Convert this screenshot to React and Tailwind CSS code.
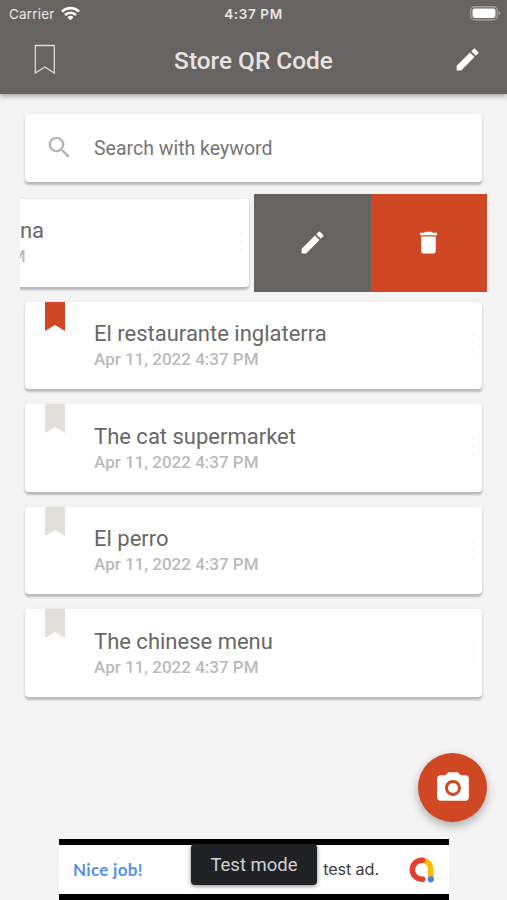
// Saved QR codes: search, swipeable list, scan button and the ad banner.

import { MdCameraAlt, MdDelete, MdEdit, MdSearch } from 'react-icons/md';

const DATE = 'Apr 11, 2022 4:37 PM';

const codes = [
  { id: 2, title: 'El restaurante inglaterra', marked: true },
  { id: 3, title: 'The cat supermarket', marked: false },
  { id: 4, title: 'El perro', marked: false },
  { id: 5, title: 'The chinese menu', marked: false },
];

const cardShadow = 'shadow-[0_2.5px_2px_rgba(0,0,0,0.2),0_1px_4px_rgba(0,0,0,0.08)]';

function StatusBar() {
  return (
    <div className="grid h-[27px] grid-cols-3 items-center pr-[7px] pl-[9px] font-['Inter',sans-serif] text-[13.5px] text-[#e9e7e6]">
      <div className="flex items-center gap-1.5">
        <span className="pt-px tracking-[0.2px]">Carrier</span>
        <svg width="19" height="15" viewBox="0 0 19 15" fill="none" stroke="#fff" strokeWidth="2.7">
          <path d="M1 5.6a12 12 0 0 1 17 0" />
          <path d="M4 9a7.8 7.8 0 0 1 11 0" />
          <path d="M9.5 14.2 6.5 11.2a4.3 4.3 0 0 1 6 0z" fill="#fff" stroke="none" />
        </svg>
      </div>
      <span className="-ml-[2px] pt-px text-center font-semibold tracking-[0.6px] whitespace-nowrap">4:37 PM</span>
      <svg className="-mr-px justify-self-end" width="31" height="15" viewBox="0 0 31 15">
        <rect x="0.75" y="0.75" width="26.5" height="13" rx="4" fill="none" stroke="#a3a09f" strokeWidth="1.3" />
        <rect x="2.5" y="2.5" width="23" height="9.5" rx="2.3" fill="#fff" />
        <path d="M28.5 5v4.6c1.2-.5 1.9-1.3 1.9-2.3s-.7-1.8-1.9-2.3z" fill="#a3a09f" />
      </svg>
    </div>
  );
}

function Header() {
  return (
    <header className="relative z-10 h-[94px] shrink-0 bg-[#676361] shadow-[0_2px_5px_rgba(0,0,0,0.35)]">
      <StatusBar />
      <div className="flex h-[67px] items-center justify-between pr-[25px] pl-[34px]">
        <svg width="22" height="31" viewBox="0 0 22 31" className="-mt-0.5" fill="none" stroke="#dedcdb" strokeWidth="1.3">
          <path d="M1.3 1.5h19v27.5l-9.5-6-9.5 6z" />
        </svg>
        <h1 className="pt-px pr-[2px] font-['Roboto',sans-serif] text-[24.4px] font-medium text-[#e6e4e3]">Store QR Code</h1>
        <MdEdit className="-mt-0.5 size-[29px] text-white" />
      </div>
    </header>
  );
}

function Dots() {
  return (
    <div className="mr-[7px] mb-[3px] ml-auto flex flex-col gap-[5px]">
      <i className="size-[3px] rounded-full bg-[#f5f5f5]" />
      <i className="size-[3px] rounded-full bg-[#f5f5f5]" />
      <i className="size-[3px] rounded-full bg-[#f5f5f5]" />
    </div>
  );
}

function CodeCard({ title, marked, titleClass = '' }) {
  return (
    <div className={`flex h-[87.6px] w-[457px] shrink-0 items-center rounded-[4px] bg-white ${cardShadow}`}>
      <svg width="20" height="29" viewBox="0 0 20 29" className="ml-[19.5px] self-start">
        <path d="M0 0h20v29l-10-6-10 6z" fill={marked ? '#cf4823' : '#e2dfd9'} />
      </svg>
      <div className="mt-[2.4px] ml-[29.5px] font-['Roboto',sans-serif]">
        <p className={`text-[22px] leading-[26px] text-[#686868] ${titleClass}`}>{title}</p>
        <p className="text-[17px] leading-[25px] font-medium text-[#bababa]">{DATE}</p>
      </div>
      <Dots />
    </div>
  );
}

function SwipedRow() {
  return (
    <div className="flex h-[97.6px] justify-end overflow-hidden">
      <div className="flex w-[234px] shrink-0 items-center justify-end pr-[5px]">
        <CodeCard title="na" titleClass="w-[183px] text-right" />
      </div>
      <button type="button" className="grid w-[116.5px] shrink-0 place-items-center bg-[#676361] text-white">
        <MdEdit className="size-[29px]" />
      </button>
      <button type="button" className="grid w-[116.5px] shrink-0 place-items-center bg-[#cf4823] text-white">
        <MdDelete className="size-[29px]" />
      </button>
    </div>
  );
}

function AdBanner() {
  return (
    <div className="relative ml-[59px] h-[61px] w-[390px] border-t-[6px] border-b-[6px] border-black bg-white">
      <div className="flex h-full items-center justify-between px-[14px]">
        <span className="font-['Lato',sans-serif] text-[17px] font-bold tracking-[0.3px] text-[#5590ee]">Nice job!</span>
        <div className="flex items-center gap-[29px]">
          <span className="font-['Inter',sans-serif] text-[16.2px] tracking-[-0.1px] text-[#3c4043]">test ad.</span>
          <svg width="27" height="27" viewBox="0 0 27 27" fill="none" strokeWidth="5.5" strokeLinecap="round">
            <path d="M13.5 4.2a9.300 9.300 0 0 1 9.300 9.300V23" stroke="#fabb05" />
            <path d="M14.5 4.2h-.7a9.500 9.500 0 0 0 0 19h.9" stroke="#e33e2f" />
            <circle cx="22.8" cy="23.3" r="3.1" fill="#4285f4" />
          </svg>
        </div>
      </div>
      <div className="absolute -top-[1px] left-[132px] grid h-[41px] w-[126px] place-items-center rounded-[4px] bg-[#202124] pt-[2px] font-['Roboto',sans-serif] text-[18.5px] text-[#d0d2d5] shadow-[0_1px_4px_rgba(0,0,0,0.5)]">
        Test mode
      </div>
    </div>
  );
}

export default function App() {
  return (
    <div className="flex h-[900px] w-[507px] flex-col overflow-hidden bg-[#f4f4f4]">
      <Header />
      <main className="flex flex-1 flex-col px-5 pt-5">
        <label className={`mx-[5px] mb-3 flex h-[68px] shrink-0 items-center rounded-[4px] bg-white pl-5 ${cardShadow}`}>
          <MdSearch className="-mt-0.5 size-[29px] text-[#b5b5b5]" />
          <span className="ml-5 pt-px font-['Roboto',sans-serif] text-[19.5px] text-[#757575]">Search with keyword</span>
        </label>
        <SwipedRow />
        {codes.map((c) => (
          <div key={c.id} className="mt-[5px] flex h-[97.6px] items-center px-[5px]">
            <CodeCard title={c.title} marked={c.marked} />
          </div>
        ))}
        <button
          type="button"
          className="mt-auto mb-[17px] grid size-[69px] shrink-0 place-items-center self-end rounded-full bg-[#cf4823] text-white shadow-[0_4px_10px_rgba(0,0,0,0.3)]"
        >
          <MdCameraAlt className="size-[38px]" />
        </button>
      </main>
      <AdBanner />
    </div>
  );
}
